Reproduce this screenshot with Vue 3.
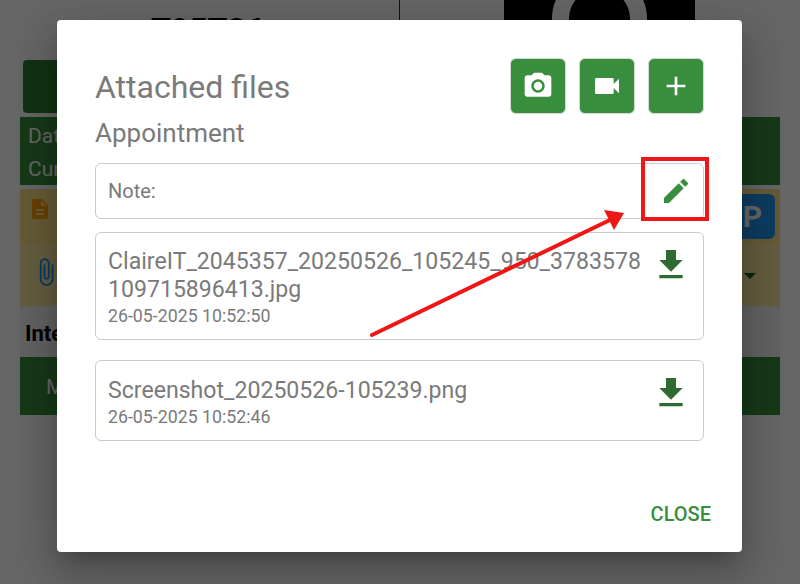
<template>
  <div class="screen">
    <div class="page">
      <div class="head">
        <div class="head-left"><span class="code">T95T86</span></div>
        <div class="head-right"><div class="photo"><div class="ring"></div></div></div>
      </div>
      <div class="tools"><div class="tool"></div></div>
      <div class="green info">
        <div>Date: 26-05-2025</div>
        <div>Current status</div>
      </div>
      <div class="yellow row-one">
        <svg class="doc" viewBox="0 0 24 24" width="24" height="24"><path fill="#ffa000" d="M14 2H6c-1.100 0-2 .9-2 2v16c0 1.100.9 2 2 2h12c1.100 0 2-.9 2-2V8l-6-6zm2 16H8v-2h8v2zm0-4H8v-2h8v2zm-3-5V3.500L18.500 9H13z"/></svg>
        <div class="parking">P</div>
      </div>
      <div class="yellow row-two">
        <svg class="clip" viewBox="0 0 24 24" width="30" height="30"><path fill="#2196f3" d="M16.500 6v11.500c0 2.210-1.790 4-4 4s-4-1.790-4-4V5c0-1.380 1.120-2.500 2.500-2.500s2.500 1.120 2.500 2.500v10.500c0 .55-.45 1-1 1s-1-.45-1-1V6H10v9.500c0 1.380 1.120 2.500 2.500 2.500s2.500-1.120 2.500-2.500V5c0-2.210-1.790-4-4-4S7 2.790 7 5v12.500c0 3.040 2.460 5.500 5.500 5.500s5.500-2.460 5.500-5.500V6h-1.500z"/></svg>
        <span class="caret"></span>
      </div>
      <div class="inter">Interventions</div>
      <div class="green more">More</div>
    </div>

    <div class="overlay">
      <div class="modal">
        <div class="top">
          <h2>Attached files</h2>
          <div class="actions">
            <button class="square">
              <svg viewBox="0 0 24 24" width="32" height="32"><circle cx="12" cy="12" r="3.200" fill="#fff"/><path fill="#fff" d="M9 2 7.170 4H4c-1.100 0-2 .9-2 2v12c0 1.100.9 2 2 2h16c1.100 0 2-.9 2-2V6c0-1.100-.9-2-2-2h-3.170L15 2H9zm3 15c-2.760 0-5-2.240-5-5s2.240-5 5-5 5 2.240 5 5-2.240 5-5 5z"/></svg>
            </button>
            <button class="square">
              <svg viewBox="0 0 24 24" width="32" height="32"><path fill="#fff" d="M17 10.500V7c0-.55-.45-1-1-1H4c-.55 0-1 .45-1 1v10c0 .55.45 1 1 1h12c.55 0 1-.45 1-1v-3.500l4 4v-11l-4 4z"/></svg>
            </button>
            <button class="square">
              <svg viewBox="0 0 24 24" width="32" height="32"><path fill="#fff" d="M19 13h-6v6h-2v-6H5v-2h6V5h2v6h6v2z"/></svg>
            </button>
          </div>
        </div>
        <div class="subtitle">Appointment</div>
        <div class="note">
          <span>Note:</span>
          <svg viewBox="0 0 24 24" width="32" height="32"><path fill="#388e3c" d="M3 17.250V21h3.750L17.810 9.940l-3.750-3.750L3 17.250zM20.710 7.040c.39-.39.39-1.020 0-1.410l-2.340-2.340c-.39-.39-1.020-.39-1.410 0l-1.830 1.830 3.750 3.750 1.830-1.830z"/></svg>
        </div>
        <div v-for="f in files" :key="f.name" class="file" :class="f.cls">
          <div class="file-text">
            <div class="file-name">{{ f.name }}</div>
            <div class="file-date">{{ f.date }}</div>
          </div>
          <svg class="dl" viewBox="0 0 24 24" width="40" height="40"><path fill="#2e6b2e" d="M19 9h-4V3H9v6H5l7 7 7-7zM5 18v2h14v-2H5z"/></svg>
        </div>
        <div class="footer"><button class="close">CLOSE</button></div>
      </div>
      <svg class="marks" width="800" height="584" viewBox="0 0 800 584">
        <rect x="643" y="159" width="64" height="60" fill="none" stroke="#f01616" stroke-width="4"/>
        <path d="M372 335 L612 219" stroke="#f01616" stroke-width="4" fill="none" stroke-linecap="round"/>
        <path d="M624 213 L604 210 L614 230 Z" fill="#f01616"/>
      </svg>
    </div>
  </div>
</template>

<script setup>
const files = [
  { name: 'ClaireIT_2045357_20250526_105245_950_3783578109715896413.jpg', date: '26-05-2025 10:52:50', cls: 'first' },
  { name: 'Screenshot_20250526-105239.png', date: '26-05-2025 10:52:46', cls: 'second' }
]
</script>

<style>
html, body { margin: 0; padding: 0; background: #fff; overflow: hidden; }
</style>

<style scoped>
.screen { position: relative; width: 800px; height: 584px; overflow: hidden; font-family: Roboto, "Liberation Sans", sans-serif; }
.page { padding: 0 20px; box-sizing: border-box; width: 800px; height: 584px; background: #fff; }
.head { display: flex; height: 60px; }
.head-left { flex: 0 0 379px; border-right: 1px solid #333; display: flex; justify-content: center; height: 60px; overflow: hidden; }
.code { font-size: 32px; font-weight: 700; color: #000; line-height: 38px; margin-top: 10px; height: 38px; margin-left: -4px; }
.head-right { flex: 1; display: flex; justify-content: center; }
.photo { width: 191px; height: 20px; background: #000; margin-left: 18px; position: relative; overflow: hidden; }
.ring { position: absolute; left: 48px; top: -28px; width: 61px; height: 58px; border: 17px solid #fff; border-radius: 50%; }
.tools { height: 57px; }
.tool { width: 120px; height: 53px; margin-left: 3px; background: #2e7d32; border-radius: 4px; }
.green { background: #388e3c; color: #fff; }
.info { height: 68px; padding: 3px 8px; box-sizing: border-box; font-size: 21px; line-height: 33px; margin-bottom: 4px; white-space: nowrap; }
.yellow { background: #ffe48a; display: flex; justify-content: space-between; padding: 0 5px 0 8px; box-sizing: border-box; }
.row-one { height: 56px; align-items: flex-start; }
.doc { flex: none; margin-top: 8px; }
.parking { width: 60px; height: 45px; border-radius: 6px; background: #2196f3; color: #fff; font-size: 30px; font-weight: 700; display: flex; align-items: center; justify-content: flex-end; padding-right: 13px; box-sizing: border-box; margin-top: 5px; }
.row-two { height: 61px; padding-right: 24px; padding-left: 11px; align-items: center; background: #fbe9a0; }
.clip { margin-top: -8px; }
.caret { width: 0; height: 0; border-left: 6px solid transparent; border-right: 6px solid transparent; border-top: 6px solid #1b5e20; }
.inter { height: 51px; line-height: 56px; background: #f5f5f5; color: #000; font-weight: 700; font-size: 22px; padding-left: 5px; box-sizing: border-box; }
.more { height: 58px; line-height: 60px; padding-left: 26px; font-size: 21px; }

.overlay { position: absolute; inset: 0; background: rgba(0, 0, 0, .6); }
.modal { position: absolute; left: 57px; top: 20px; width: 685px; height: 532px; box-sizing: border-box; background: #fff; border-radius: 4px; padding: 38px 38px 0; box-shadow: 0 11px 15px -7px rgba(0,0,0,.2), 0 24px 38px 3px rgba(0,0,0,.14), 0 9px 46px 8px rgba(0,0,0,.12); }
.top { display: flex; justify-content: space-between; height: 56px; }
h2 { margin: 0; font-size: 32px; font-weight: 400; color: #7a7a7a; line-height: 58px; }
.actions { display: flex; gap: 13px; }
.square { width: 56px; height: 56px; padding: 0; border: 1px solid #d6d6d6; border-radius: 6px; background: #388e3c; display: flex; align-items: center; justify-content: center; box-sizing: border-box; }
.subtitle { font-size: 26px; color: #7a7a7a; line-height: 30px; margin-top: 4px; height: 30px; }
.note, .file { border: 1px solid #cacaca; border-radius: 6px; box-sizing: border-box; display: flex; justify-content: space-between; color: #7a7a7a; }
.note { height: 56px; margin-top: 15px; padding: 0 11px 0 12px; align-items: center; font-size: 20px; }
.file { padding: 0 12px; }
.first { height: 108px; margin-top: 13px; }
.second { height: 81px; margin-top: 20px; }
.file-text { width: 533px; padding-top: 15px; }
.second .file-text { padding-top: 16px; }
.file-name { font-size: 23.100px; line-height: 28px; word-break: break-all; }
.file-date { font-size: 17.750px; line-height: 22px; margin-top: 1px; }
.dl { flex: none; margin-top: 12px; }
.footer { display: flex; justify-content: flex-end; margin-top: 61px; margin-right: -7px; }
.close { border: 0; background: none; padding: 0; font: 500 20px/24px Roboto, sans-serif; color: #388e3c; }
.marks { position: absolute; left: 0; top: 0; pointer-events: none; }
</style>
